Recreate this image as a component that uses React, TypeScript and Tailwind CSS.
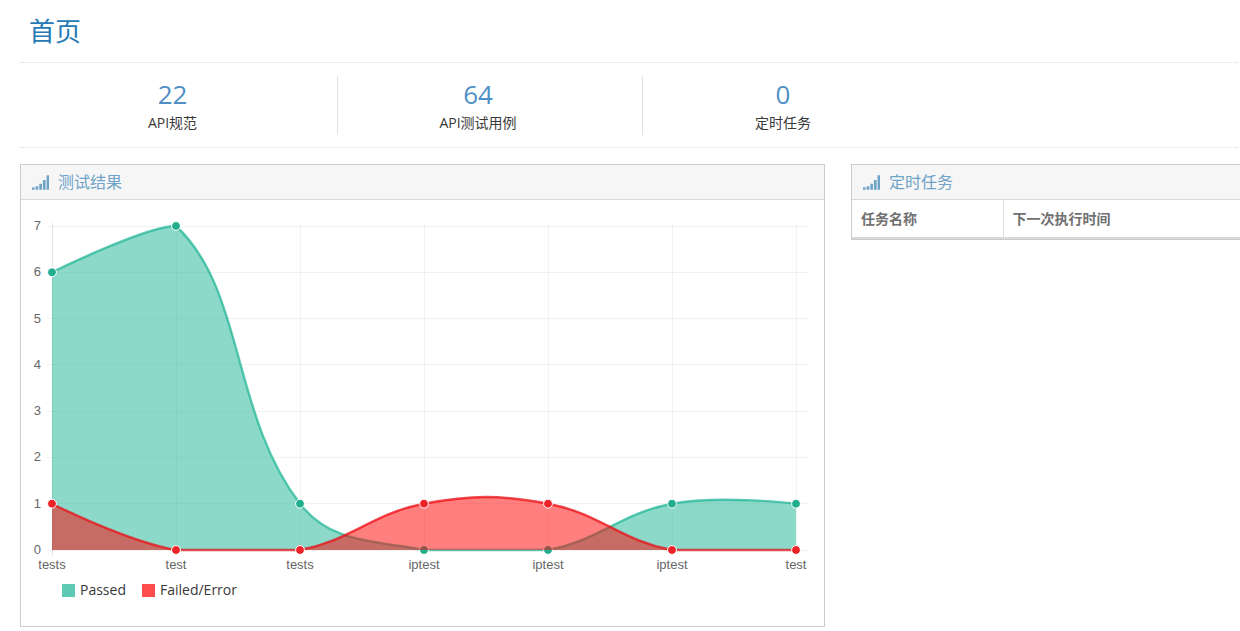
import type { ReactNode } from "react";

type Stat = { label: string; value: number };
type Point = { x: number; y: number };
type Series = { name: string; values: number[]; fill: string; stroke: string; point: string };

const stats: Stat[] = [
  { label: "API规范", value: 22 },
  { label: "API测试用例", value: 64 },
  { label: "定时任务", value: 0 },
];

const labels = ["tests", "test", "tests", "iptest", "iptest", "iptest", "test"];

const series: Series[] = [
  {
    name: "Passed",
    values: [6, 7, 1, 0, 0, 1, 1],
    fill: "rgba(26,179,148,0.5)",
    stroke: "rgba(26,179,148,0.7)",
    point: "#21ad8e",
  },
  {
    name: "Failed/Error",
    values: [1, 0, 0, 1, 1, 0, 0],
    fill: "rgba(255,0,0,0.5)",
    stroke: "rgba(225,20,30,0.75)",
    point: "#ee2229",
  },
];

const MAX = 7;
const LEFT = 31;
const TOP = 26;
const BOTTOM = 350;
const STEP = 124;
const TENSION = 0.4;

const toX = (i: number) => LEFT + i * STEP;
const toY = (v: number) => BOTTOM - (v / MAX) * (BOTTOM - TOP);
const clampY = (y: number) => Math.min(BOTTOM, Math.max(TOP, y));

// bezier handles around each point, kept inside the scale
function handles(points: Point[], i: number) {
  const p = points[i];
  const prev = points[i - 1];
  const next = points[i + 1];
  if (!prev || !next) return { inner: p, outer: p };
  const d0 = Math.hypot(p.x - prev.x, p.y - prev.y);
  const d1 = Math.hypot(next.x - p.x, next.y - p.y);
  const a = (TENSION * d0) / (d0 + d1);
  const b = (TENSION * d1) / (d0 + d1);
  return {
    inner: { x: p.x - a * (next.x - prev.x), y: clampY(p.y - a * (next.y - prev.y)) },
    outer: { x: p.x + b * (next.x - prev.x), y: clampY(p.y + b * (next.y - prev.y)) },
  };
}

function curve(points: Point[]) {
  return points
    .map((p, i) => {
      if (i === 0) return `M${p.x} ${p.y}`;
      const c1 = handles(points, i - 1).outer;
      const c2 = handles(points, i).inner;
      return `C${c1.x} ${c1.y} ${c2.x} ${c2.y} ${p.x} ${p.y}`;
    })
    .join(" ");
}

function SignalIcon() {
  const bars = [256, 384, 640, 1024, 1536];
  return (
    <svg viewBox="0 0 1792 1536" className="h-[15px] w-[17px] shrink-0" fill="currentColor" aria-hidden="true">
      {bars.map((h, i) => (
        <rect key={h} x={i * 384} y={1536 - h} width="280" height={h} rx="32" />
      ))}
    </svg>
  );
}

function Panel({ title, className, children }: { title: string; className: string; children: ReactNode }) {
  return (
    <section className={className}>
      <h2 className="flex h-[35px] items-center gap-[9px] border-b border-[#d9d9d9] bg-[#f6f6f6] px-[11px] text-base text-[#6fa3c7]">
        <SignalIcon />
        {title}
      </h2>
      {children}
    </section>
  );
}

function ResultChart() {
  return (
    <svg
      viewBox="0 0 803 378"
      className="block w-full font-['Liberation_Sans',Arial,sans-serif] text-[13px]"
      role="img"
      aria-label="测试结果"
    >
      <g stroke="rgba(0,0,0,0.05)" shapeRendering="crispEdges">
        {Array.from({ length: MAX + 1 }, (_, v) => (
          <line key={v} x1={LEFT - 5} x2="788" y1={toY(v)} y2={toY(v)} />
        ))}
        {labels.map((_, i) => (
          <line key={i} x1={toX(i)} x2={toX(i)} y1={TOP - 3} y2={BOTTOM + 5} />
        ))}
        <line x1={LEFT} x2={LEFT} y1={TOP - 3} y2={BOTTOM + 5} />
      </g>

      <g fill="#666">
        {Array.from({ length: MAX + 1 }, (_, v) => (
          <text key={v} x="20" y={toY(v) + 4} textAnchor="end">
            {v}
          </text>
        ))}
        {labels.map((label, i) => (
          <text key={i} x={toX(i)} y={BOTTOM + 19} textAnchor="middle">
            {label}
          </text>
        ))}
      </g>

      {series.map((s) => {
        const points = s.values.map((v, i) => ({ x: toX(i), y: toY(v) }));
        const line = curve(points);
        return (
          <g key={s.name}>
            <path d={line} fill="none" stroke={s.stroke} strokeWidth="2.4" />
            <path d={`${line} L${toX(labels.length - 1)} ${BOTTOM} L${LEFT} ${BOTTOM} Z`} fill={s.fill} />
            {points.map((p, i) => (
              <circle key={i} cx={p.x} cy={p.y} r="4.4" fill={s.point} stroke="#fff" />
            ))}
          </g>
        );
      })}
    </svg>
  );
}

export default function App() {
  return (
    <main className="min-h-screen bg-white pl-5 font-['Open_Sans','Noto_Sans_CJK_SC',sans-serif] text-[#393939]">
      <h1 className="mr-0.5 flex h-[63px] items-center border-b border-dotted border-[#dcdcdc] px-[9px] text-[26px] text-[#2679b5]">
        首页
      </h1>

      <div className="grid grid-cols-4 pt-[13px] pb-3">
        {stats.map((s, i) => (
          <div key={s.label} className="px-3">
            <div
              className={
                i === 0
                  ? "flex flex-col items-center pb-0.5"
                  : "flex flex-col items-center border-l border-[#e2e2e2] pb-0.5"
              }
            >
              <span className="text-[26px] leading-9 text-[#4f90c6]">{s.value}</span>
              <span className="text-sm leading-[21px]">{s.label}</span>
            </div>
          </div>
        ))}
      </div>
      <hr className="mr-0.5 border-dotted border-[#dcdcdc]" />

      <div className="mt-4 grid grid-cols-[805fr_389fr] items-start gap-[26px]">
        <Panel title="测试结果" className="border border-[#ccc]">
          <ResultChart />
          <ul className="flex gap-4 px-[41px] pb-6 text-sm leading-6">
            <li className="flex items-center gap-[5px]">
              <span className="size-[13px] bg-[#5ecab4]" />
              Passed
            </li>
            <li className="flex items-center gap-[5px]">
              <span className="size-[13px] bg-[#ff4d4d]" />
              Failed/Error
            </li>
          </ul>
        </Panel>

        <Panel title="定时任务" className="border-y border-l border-[#ccc]">
          <table className="w-full text-left text-sm text-[#707070]">
            <thead>
              <tr className="h-[38px] border-b-2 border-[#d9d9d9]">
                <th className="w-[151px] border-r border-[#ddd] px-[9px] font-bold">任务名称</th>
                <th className="px-[9px] font-bold">下一次执行时间</th>
              </tr>
            </thead>
          </table>
        </Panel>
      </div>
    </main>
  );
}
